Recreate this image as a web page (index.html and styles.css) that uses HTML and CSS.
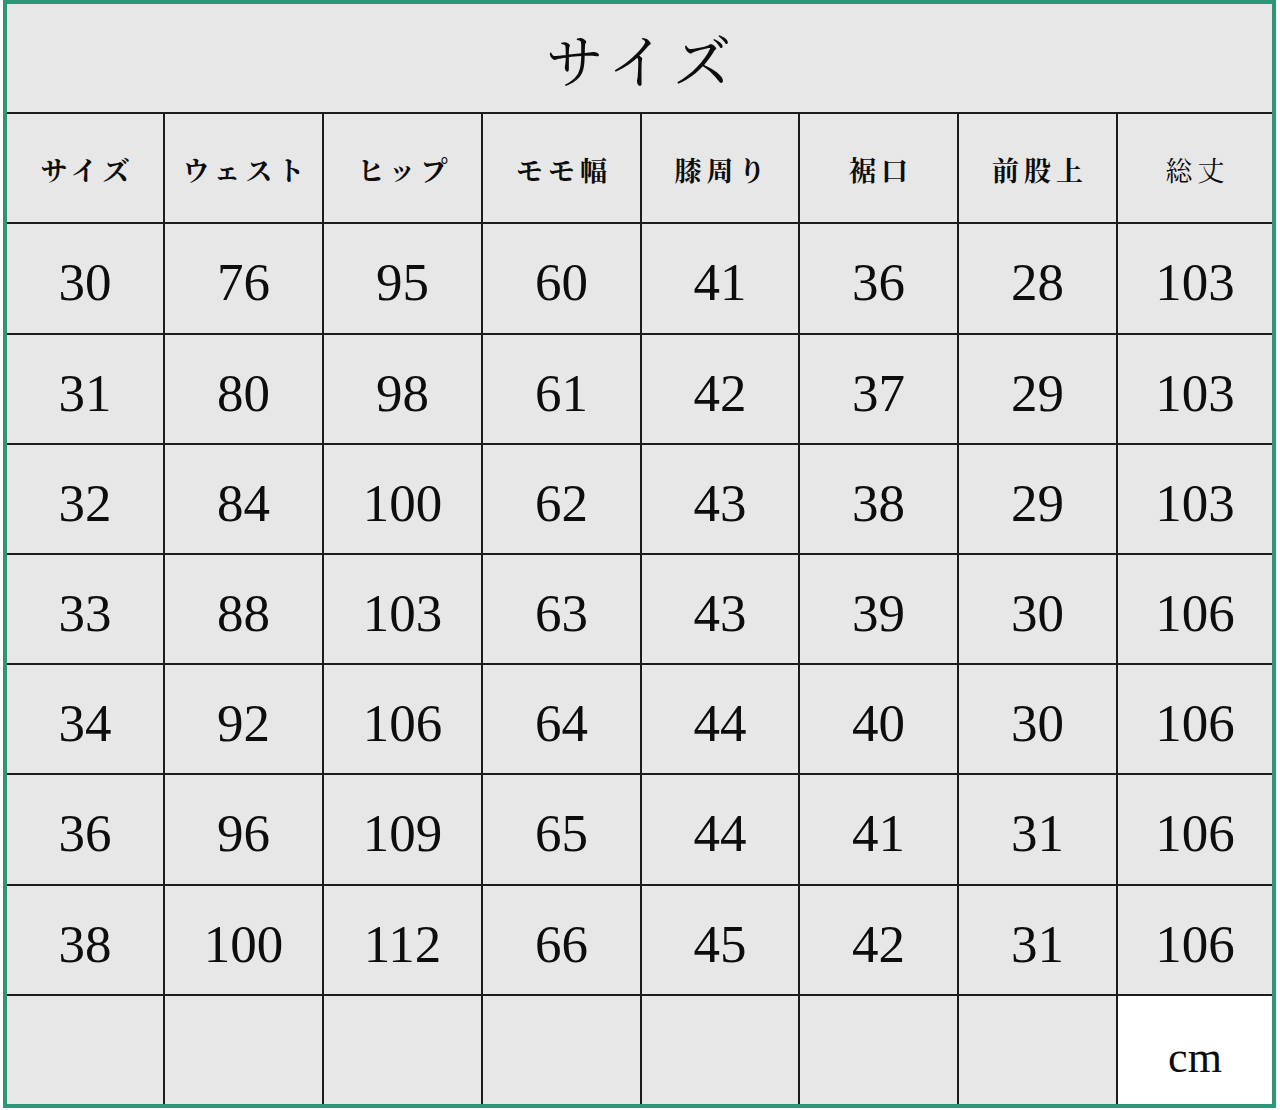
FILE: index.html
```html
<!DOCTYPE html>
<html lang="ja">
<head>
<meta charset="utf-8">
<title>サイズ</title>
<link rel="stylesheet" href="styles.css">
</head>
<body>
<div class="frame">
  <div class="sheet">
    <div class="cell title">サイズ</div>

    <div class="cell head bold">サイズ</div>
    <div class="cell head bold">ウェスト</div>
    <div class="cell head bold">ヒップ</div>
    <div class="cell head bold">モモ幅</div>
    <div class="cell head bold">膝周り</div>
    <div class="cell head bold">裾口</div>
    <div class="cell head bold">前股上</div>
    <div class="cell head">総丈</div>

    <div class="cell num">30</div><div class="cell num">76</div><div class="cell num">95</div><div class="cell num">60</div><div class="cell num">41</div><div class="cell num">36</div><div class="cell num">28</div><div class="cell num">103</div>
    <div class="cell num">31</div><div class="cell num">80</div><div class="cell num">98</div><div class="cell num">61</div><div class="cell num">42</div><div class="cell num">37</div><div class="cell num">29</div><div class="cell num">103</div>
    <div class="cell num">32</div><div class="cell num">84</div><div class="cell num">100</div><div class="cell num">62</div><div class="cell num">43</div><div class="cell num">38</div><div class="cell num">29</div><div class="cell num">103</div>
    <div class="cell num">33</div><div class="cell num">88</div><div class="cell num">103</div><div class="cell num">63</div><div class="cell num">43</div><div class="cell num">39</div><div class="cell num">30</div><div class="cell num">106</div>
    <div class="cell num">34</div><div class="cell num">92</div><div class="cell num">106</div><div class="cell num">64</div><div class="cell num">44</div><div class="cell num">40</div><div class="cell num">30</div><div class="cell num">106</div>
    <div class="cell num">36</div><div class="cell num">96</div><div class="cell num">109</div><div class="cell num">65</div><div class="cell num">44</div><div class="cell num">41</div><div class="cell num">31</div><div class="cell num">106</div>
    <div class="cell num">38</div><div class="cell num">100</div><div class="cell num">112</div><div class="cell num">66</div><div class="cell num">45</div><div class="cell num">42</div><div class="cell num">31</div><div class="cell num">106</div>

    <div class="cell"></div><div class="cell"></div><div class="cell"></div><div class="cell"></div><div class="cell"></div><div class="cell"></div><div class="cell"></div><div class="cell unit">cm</div>
  </div>
</div>
</body>
</html>
```

FILE: styles.css
```css
html, body {
  margin: 0;
  padding: 0;
  background: #ffffff;
}

.frame {
  margin-left: 3px;
  width: 1265px;
  height: 1100px;
  border: 4px solid #2e9676;
}

.sheet {
  display: grid;
  grid-template-columns: 156px 157px 157px 157px 156px 157px 157px 154px;
  grid-template-rows: repeat(10, 1fr);
  gap: 2px;
  height: 100%;
  background: #1c1c1c;
}

.cell {
  background: #e7e7e7;
  display: flex;
  align-items: center;
  justify-content: center;
  color: #0d0d0d;
}

.title {
  grid-column: 1 / -1;
  font-family: "Noto Serif CJK JP", "Noto Sans CJK JP", serif;
  font-size: 58px;
  font-weight: 400;
  letter-spacing: 8px;
  padding-left: 6px;
}

.head {
  font-family: "Noto Serif CJK JP", "Noto Sans CJK JP", serif;
  font-size: 27px;
  letter-spacing: 5px;
  padding-left: 5px;
  font-weight: 400;
  padding-top: 2px;
}

.bold {
  font-weight: 700;
}

.num {
  font-family: "Liberation Serif", "Times New Roman", serif;
  font-size: 53px;
  padding-top: 8px;
}

.unit {
  background: #ffffff;
  font-family: "Liberation Serif", serif;
  font-size: 44px;
  padding-top: 16px;
}
```
